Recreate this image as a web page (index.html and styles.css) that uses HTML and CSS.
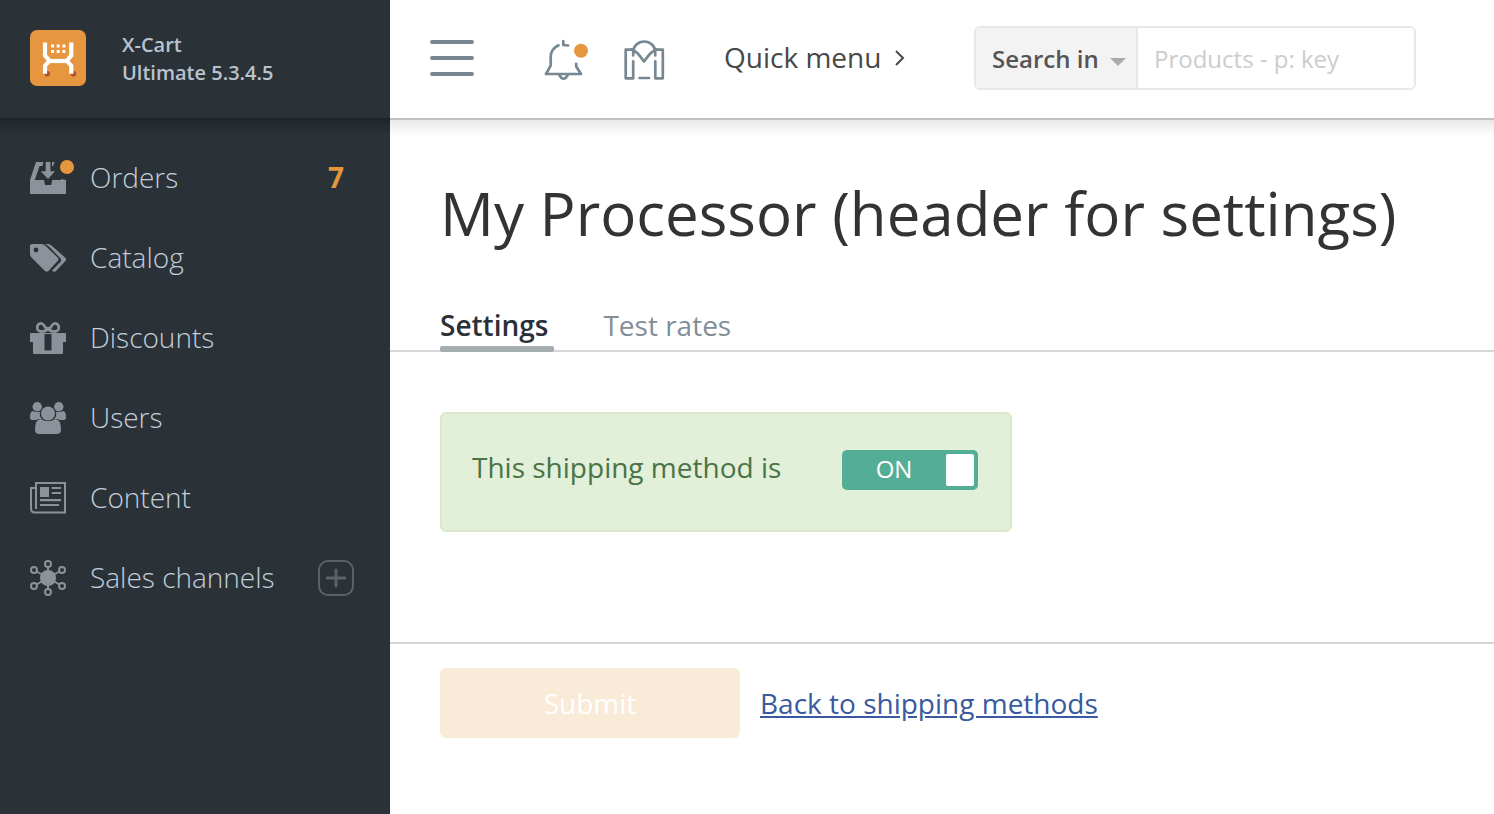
FILE: index.html
```html
<!DOCTYPE html>
<html lang="en">
<head>
  <meta charset="UTF-8">
  <meta name="viewport" content="width=device-width, initial-scale=1.0">
  <title>My Processor - X-Cart</title>
  <link rel="stylesheet" href="styles.css">
</head>
<body>
  <aside class="sidebar">
    <div class="brand">
      <svg class="brand-logo" viewBox="0 0 56 56" aria-hidden="true">
        <rect width="56" height="56" rx="7" fill="#e5963f"/>
        <circle cx="17.200" cy="43.800" r="2.800" fill="#b2502f"/>
        <circle cx="43.500" cy="43.800" r="2.800" fill="#b2502f"/>
        <g fill="none" stroke="#fff" stroke-width="4.200">
          <path d="M15 12.500V25.500L19.500 30.800L15 35.700V43.700"/>
          <path d="M41.300 12.500V25.500L36.800 30.800L41.300 35.700V43.700"/>
          <path d="M18.500 31H38"/>
        </g>
        <path fill="#fff" d="M21 14.500h3v3h-3zM26.700 14.500h3v3h-3zM32.400 14.500h3v3h-3zM21 20h3v3h-3zM26.700 20h3v3h-3zM32.400 20h3v3h-3z"/>
      </svg>
      <div class="brand-text">X-Cart<br>Ultimate 5.3.4.5</div>
    </div>

    <nav class="menu">
      <div class="menu-row">
        <a class="menu-link" href="#">
          <svg class="menu-icon" viewBox="0 0 36 36" aria-hidden="true">
            <path d="M6 2h7.300l-.8 4H9.500L4.800 20H14l1 5h6.200l1.100-5H31v-1l5 1v14H0V20z"/>
            <path d="M15.700 2h4.700v9.300h4.600L18 19l-7.300-7.700h5zM22 2h2.700L23 6h-1z"/>
            <circle class="dot" cx="37" cy="7" r="7"/>
          </svg>
          <span>Orders</span>
        </a>
        <span class="menu-count">7</span>
      </div>
      <div class="menu-row">
        <a class="menu-link" href="#">
          <svg class="menu-icon" viewBox="0 0 36 36" aria-hidden="true">
            <path fill-rule="evenodd" d="M0 6q0-2 2-2h9.500q2 0 4 1.700L27.600 17.500q1.800 1.800 0 3.600L18.400 31q-1.700 1.600-3.400 0L1.700 17.800Q0 16 0 14zM6 7.600a2.400 2.400 0 1 0 0 4.800a2.400 2.400 0 0 0 0-4.800z"/>
            <path d="M15 4h3q2 0 3.800 1.700L35 17.500q2 1.900.2 3.700L26 31q-1.700 1.700-4-.5l8.500-8.600q1.500-1.800-.2-3.600L20 7.500Q17.500 5 15 4z"/>
          </svg>
          <span>Catalog</span>
        </a>
      </div>
      <div class="menu-row">
        <a class="menu-link" href="#">
          <svg class="menu-icon" viewBox="0 0 36 36" aria-hidden="true">
            <path fill-rule="evenodd" d="M1 13h34q1 0 1 1v8h-3v11q0 1-1 1H4q-1 0-1-1V22H0v-8q0-1 1-1zM14.500 14v16.500h7V14z"/>
            <path d="M16.500 9.500C14.500 5.500 13 3.300 11 3.300C6 3.300 6 11.500 11 11.500C14 11.500 15.500 11.500 18 8.500C20.500 11.500 22 11.500 25 11.500C30 11.500 30 3.300 25 3.300C23 3.300 21.500 5.500 19.500 9.500" fill="none" stroke="#8b9299" stroke-width="2.800"/>
          </svg>
          <span>Discounts</span>
        </a>
      </div>
      <div class="menu-row">
        <a class="menu-link" href="#">
          <svg class="menu-icon" viewBox="0 0 36 36" aria-hidden="true">
            <circle cx="7.200" cy="6.700" r="4.700"/>
            <circle cx="28.800" cy="6.700" r="4.700"/>
            <circle cx="18" cy="13.500" r="7"/>
            <path d="M2.500 11q4.500 2 7.500.5q-1 5 2 7.300Q8.500 18.500 6.500 20H2q-2 0-2-3q0-5 2.500-6zM33.500 11q-4.500 2-7.500.5q1 5-2 7.300q3.500-.3 5.500 1.200H34q2 0 2-3q0-5-2.500-6z"/>
            <path d="M11 19q7 4.500 14 0q6 0 6 11q0 4-4 4H9q-4 0-4-4q0-11 6-11z"/>
          </svg>
          <span>Users</span>
        </a>
      </div>
      <div class="menu-row">
        <a class="menu-link" href="#">
          <svg class="menu-icon" viewBox="0 0 36 36" aria-hidden="true">
            <path d="M6 29V3h29v29.500H5q-4 0-4-4V8h4" fill="none" stroke="#8b9299" stroke-width="2"/>
            <path d="M10 7h9v10h-9zM21.700 7H31v2h-9.300zM21.700 12H31v2h-9.300zM10 19h21v2.300H10zM10 24h19v2H10z"/>
          </svg>
          <span>Content</span>
        </a>
      </div>
      <div class="menu-row">
        <a class="menu-link" href="#">
          <svg class="menu-icon" viewBox="0 0 36 36" aria-hidden="true">
            <circle cx="18" cy="18" r="8"/>
            <g fill="none" stroke="#8b9299" stroke-width="2">
              <circle cx="18" cy="4" r="3"/>
              <circle cx="18" cy="32" r="3"/>
              <circle cx="4" cy="10" r="3"/>
              <circle cx="32" cy="10" r="3"/>
              <circle cx="4" cy="26" r="3"/>
              <circle cx="32" cy="26" r="3"/>
              <path d="M18 7v22M6.600 11.500l22.800 13M29.400 11.500l-22.800 13"/>
            </g>
          </svg>
          <span>Sales channels</span>
        </a>
        <button class="menu-add" type="button" aria-label="Add sales channel">
          <svg viewBox="0 0 20 20" aria-hidden="true"><path d="M10 2v16M1 10h18"/></svg>
        </button>
      </div>
    </nav>
  </aside>

  <div class="page">
    <header class="header">
      <button class="icon-btn burger" type="button" aria-label="Toggle menu">
        <svg viewBox="0 0 44 44" aria-hidden="true"><path d="M2 6h40M2 22h40M2 38h40" stroke-width="4"/></svg>
      </button>
      <div class="header-icons">
        <button class="icon-btn" type="button" aria-label="Notifications">
          <svg viewBox="0 0 44 44" aria-hidden="true">
            <path d="M14.500 9.300Q6.700 13 6.700 21v8.500L2 38h35L32.200 30.500V27.800M15.500 39.500q4 6.500 8 0M19.300 5v4l4.700.5"/>
            <circle class="dot" cx="37" cy="14.700" r="7"/>
          </svg>
        </button>
        <button class="icon-btn" type="button" aria-label="Storefront">
          <svg viewBox="0 0 44 44" aria-hidden="true">
            <path d="M9.200 19.500V16a11 10.500 0 0 1 22 0v3.500M7.500 13.700Q12 14 20 25.500Q28 14 33 13.700"/>
            <path d="M8 13.700H1.700v28.600h7.500v-17M32.500 13.700h6.300v28.600h-7.500v-17M15.500 42h9.500"/>
          </svg>
        </button>
      </div>
      <a class="quick-menu" href="#"><span>Quick menu</span>
        <svg viewBox="0 0 12 18" aria-hidden="true"><path d="M3 2l7 7l-7 7"/></svg>
      </a>
      <form class="search">
        <div class="search-in">
          <select aria-label="Search in">
            <option>Search in</option>
          </select>
        </div>
        <input type="text" placeholder="Products - p: key" aria-label="Search">
      </form>
    </header>

    <main class="content">
      <h1>My Processor (header for settings)</h1>
      <nav class="tabs">
        <a class="tab active" href="#">Settings</a>
        <a class="tab" href="#">Test rates</a>
      </nav>

      <form class="settings">
        <div class="method-state">
          <label class="method-label" for="enabled">This shipping method is</label>
          <label class="switch">
            <input type="checkbox" id="enabled" checked>
            <span class="switch-text">ON</span>
            <span class="switch-knob"></span>
          </label>
        </div>
        <div class="form-footer">
          <button class="submit" type="submit" disabled>Submit</button>
          <a href="#">Back to shipping methods</a>
        </div>
      </form>
    </main>
  </div>
</body>
</html>
```
FILE: styles.css
```css
* {
  box-sizing: border-box;
}
body {
  margin: 0;
  display: grid;
  grid-template-columns: 390px 1fr;
  min-height: 100vh;
  background: #fff;
  color: #333;
  font-family: "Open Sans", sans-serif;
  font-size: 28px;
  line-height: 40px;
}
a {
  text-decoration: none;
}
button, input, select {
  font: inherit;
  margin: 0;
}
button {
  padding: 0;
  border: none;
  background: none;
  cursor: pointer;
}
svg {
  display: block;
}
.dot {
  fill: #e5963f;
  stroke: none;
}

/* sidebar */
.sidebar {
  background: #2a3237;
}
.brand {
  position: relative;
  display: flex;
  align-items: center;
  gap: 36px;
  height: 118px;
  padding: 0 30px 2px;
}
.brand::after {
  content: "";
  position: absolute;
  top: 100%;
  left: 0;
  right: 0;
  height: 16px;
  background: linear-gradient(#1f2427, #2a3237);
}
.brand-logo {
  width: 56px;
  height: 56px;
}
.brand-text {
  padding-top: 2px;
  color: #b9c3cf;
  font-size: 20px;
  font-weight: 600;
  line-height: 28px;
}
.menu {
  padding-top: 20px;
}
.menu-row {
  display: flex;
  align-items: center;
  justify-content: space-between;
  height: 80px;
  padding: 0 36px 0 30px;
}
.menu-link {
  display: flex;
  align-items: center;
  gap: 24px;
  color: #c3cddb;
  font-weight: 300;
}
.menu-link span,
.menu-count,
.quick-menu span {
  padding-bottom: 2px;
}
.menu-icon {
  width: 36px;
  height: 36px;
  fill: #8b9299;
  overflow: visible;
}
.menu-count {
  padding-right: 10px;
  color: #e5963f;
  font-weight: 700;
}
.menu-add {
  display: flex;
  align-items: center;
  justify-content: center;
  width: 36px;
  height: 36px;
  border: 2px solid #5a6167;
  border-radius: 10px;
}
.menu-add svg {
  width: 20px;
  height: 20px;
  stroke: #5a6167;
  stroke-width: 3;
  stroke-linecap: round;
}

/* header */
.page {
  min-width: 0;
}
.header {
  position: relative;
  display: flex;
  align-items: center;
  height: 120px;
  padding: 0 78px 2px 40px;
  border-bottom: 2px solid #c1c1c1;
}
.header::after {
  content: "";
  position: absolute;
  top: 100%;
  left: 0;
  right: 0;
  height: 16px;
  margin-top: 2px;
  background: linear-gradient(#e8e8e8, #fff);
}
.icon-btn svg {
  width: 44px;
  height: 44px;
  fill: none;
  stroke: #788892;
  stroke-width: 2.7;
  stroke-linecap: round;
  stroke-linejoin: round;
}
.header-icons {
  display: flex;
  gap: 36px;
  margin: 0 56px 0 70px;
}
.quick-menu {
  display: flex;
  align-items: center;
  gap: 12px;
  margin-right: auto;
  color: #484848;
  white-space: nowrap;
}
.quick-menu svg {
  width: 12px;
  height: 18px;
  fill: none;
  stroke: #484848;
  stroke-width: 2;
}
.search {
  display: flex;
  flex: 0 1 442px;
  height: 64px;
  border: 2px solid #e8e8e8;
  border-radius: 6px;
  overflow: hidden;
  font-size: 24px;
}
.search-in {
  position: relative;
  flex: none;
  width: 162px;
  background: #f3f3f3;
  border-right: 2px solid #e8e8e8;
}
.search-in::after {
  content: "";
  position: absolute;
  top: 30px;
  right: 10px;
  border: 8px solid transparent;
  border-top-color: #aaa;
  border-bottom: none;
  pointer-events: none;
}
.search-in select {
  appearance: none;
  width: 100%;
  height: 100%;
  padding: 2px 16px 0;
  border: none;
  background: none;
  color: #555;
  font-weight: 600;
}
.search input {
  flex: 1;
  min-width: 0;
  padding: 2px 16px 0;
  border: none;
  outline: none;
}
.search input::placeholder {
  color: #ccc;
  opacity: 1;
}

/* content */
.content {
  padding-top: 53px;
}
h1 {
  margin: 0 50px 52px;
  font-size: 60px;
  font-weight: 400;
  line-height: 80px;
}
.tabs {
  display: flex;
  gap: 49px;
  padding: 0 50px;
  border-bottom: 2px solid #d5d7da;
}
.tab {
  position: relative;
  padding: 0 6px 5px 0;
  color: #818e98;
}
.tab.active {
  color: #2b2f38;
  font-weight: 600;
}
.tab.active::after {
  content: "";
  position: absolute;
  left: 0;
  right: 0;
  bottom: -2px;
  height: 6px;
  border-radius: 2px;
  background: #a5adb1;
}
.method-state {
  display: flex;
  align-items: center;
  justify-content: space-between;
  max-width: 572px;
  height: 120px;
  margin: 60px 50px 110px;
  padding: 0 32px 4px 30px;
  border: 2px solid #d8e9c9;
  border-radius: 6px;
  background: #e2efd9;
  color: #497446;
}
.method-label {
  padding-bottom: 6px;
}
.switch {
  display: flex;
  align-items: center;
  width: 136px;
  height: 40px;
  padding: 4px;
  border-radius: 5px;
  background: #54ae95;
  color: #fff;
  font-size: 24px;
  cursor: pointer;
}
.switch input {
  position: absolute;
  opacity: 0;
}
.switch-text {
  flex: 1;
  padding: 0 4px 2px 0;
  text-align: center;
}
.switch-knob {
  width: 28px;
  height: 32px;
  border-radius: 2px;
  background: #fff;
}
.form-footer {
  display: flex;
  align-items: center;
  gap: 20px;
  padding: 24px 50px;
  border-top: 2px solid #d5d5d5;
}
.form-footer a {
  color: #395a9e;
  text-decoration: underline;
}
.submit {
  width: 300px;
  height: 70px;
  border-radius: 6px;
  background: #faead8;
  color: #fff;
}
```
